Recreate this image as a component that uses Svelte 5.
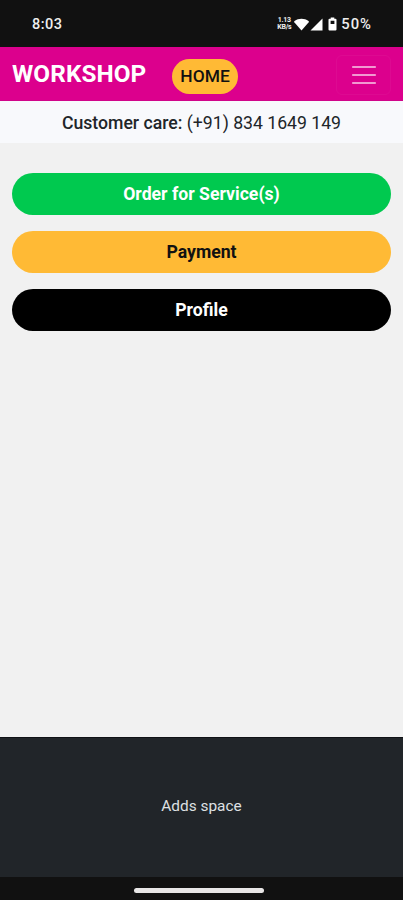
<script>
	const links = [
		{ label: 'Order for Service(s)', style: 'green' },
		{ label: 'Payment', style: 'yellow' },
		{ label: 'Profile', style: 'black' }
	];

	let menuOpen = $state(false);
</script>

<div class="screen">
	<div class="status-bar">
		<span class="time">8:03</span>
		<div class="status-icons">
			<div class="speed">
				<span>1.13</span>
				<span>KB/s</span>
			</div>
			<svg class="wifi" width="15" height="13" viewBox="0 0 15 13" fill="#fff">
				<path d="M7.5 12.6 0.3 4.2C0 3.8 0.1 3.2 0.5 2.9C4.6 -0.1 10.4 -0.1 14.5 2.9C14.9 3.2 15 3.8 14.7 4.2Z" />
			</svg>
			<svg class="signal" width="13" height="13" viewBox="0 0 13 13" fill="#fff">
				<path d="M12.5 0.5V12.5H0.5Z" />
			</svg>
			<svg class="battery" width="9" height="14" viewBox="0 0 9 14">
				<path
					fill="#fff"
					fill-rule="evenodd"
					d="M2.7 0.5H6.3V1.8H7.5Q8.5 1.8 8.5 2.8V12.4Q8.5 13.4 7.5 13.4H1.5Q0.5 13.4 0.5 12.4V2.8Q0.5 1.8 1.5 1.8H2.7ZM2.6 3.8V7H6.4V3.8Z"
				/>
			</svg>
			<span class="percent">50%</span>
		</div>
	</div>

	<nav>
		<a class="brand" href="/">WORKSHOP</a>
		<a class="home" href="/">HOME</a>
		<button type="button" aria-label="Toggle menu" onclick={() => (menuOpen = !menuOpen)}>
			<svg width="30" height="30" viewBox="0 0 30 30">
				<path
					stroke="rgba(255, 255, 255, 0.6)"
					stroke-linecap="round"
					stroke-width="2.2"
					d="M4 7h22M4 15h22M4 23h22"
				/>
			</svg>
		</button>
	</nav>

	<div class="care">
		<p><b>Customer care:</b> <span>(+91) 834 1649 149</span></p>
	</div>

	<main>
		{#each links as link}
			<a class="link {link.style}" href="/"><span>{link.label}</span></a>
		{/each}
	</main>

	<footer>
		<span>Adds space</span>
	</footer>

	<div class="gesture-bar">
		<div class="handle"></div>
	</div>
</div>

<style>
	:global(body) {
		margin: 0;
	}

	.screen {
		display: flex;
		flex-direction: column;
		width: 100%;
		height: 900px;
		background-color: #f1f1f1;
		font-family: Roboto, sans-serif;
		color: #212529;
	}

	a {
		text-decoration: none;
	}

	.status-bar {
		display: flex;
		align-items: center;
		justify-content: space-between;
		box-sizing: border-box;
		height: 47px;
		padding: 1px 31px 0 32px;
		background-color: #111;
		color: #eee;
	}

	.time {
		font-size: 14.5px;
		font-weight: 500;
		letter-spacing: 0.5px;
	}

	.status-icons {
		display: flex;
		align-items: center;
	}

	.speed {
		display: flex;
		flex-direction: column;
		align-items: center;
		width: 14px;
		margin-right: 3px;
		font-size: 7px;
		font-weight: 700;
		line-height: 7px;
		letter-spacing: -0.3px;
	}

	.signal {
		margin: 0 5px 0 1px;
	}

	.percent {
		margin-left: 4px;
		font-size: 14.8px;
		font-weight: 500;
		letter-spacing: 1px;
	}

	nav {
		display: flex;
		align-items: center;
		box-sizing: border-box;
		height: 54px;
		padding: 0 12px 0 12px;
		background-color: #dc008d;
		border-bottom: 1px solid #d0048a;
	}

	.brand {
		font-size: 24.3px;
		font-weight: 700;
		letter-spacing: 0.1px;
		color: #fff;
	}

	.home {
		margin: 5px 0 0 26px;
		padding: 0 8px;
		border-radius: 18px;
		background-color: #ffba35;
		font-size: 17.4px;
		font-weight: 500;
		line-height: 35px;
		color: #111;
	}

	nav button {
		display: flex;
		align-items: center;
		justify-content: center;
		box-sizing: border-box;
		width: 55px;
		height: 40px;
		margin: 2px 0 0 auto;
		padding: 0;
		border: 1px solid rgba(255, 255, 255, 0.04);
		border-radius: 6px;
		background: none;
	}

	.care {
		height: 42px;
		background-color: #f8f9fc;
		text-align: center;
	}

	.care p {
		margin: 0;
		font-size: 17.65px;
		line-height: 44px;
	}

	.care b {
		font-weight: 500;
	}

	main {
		display: flex;
		flex: 1;
		flex-direction: column;
		gap: 16px;
		padding: 30px 12px 0;
	}

	.link {
		height: 42px;
		border-radius: 21px;
		font-size: 17.65px;
		font-weight: 700;
		line-height: 42px;
		text-align: center;
	}

	.green {
		background-color: #00c94f;
		color: #fff;
	}

	.yellow {
		background-color: #ffba35;
		color: #111;
	}

	.black {
		background-color: #000;
		color: #fff;
	}

	footer {
		display: flex;
		align-items: center;
		justify-content: center;
		box-sizing: border-box;
		height: 140px;
		padding-bottom: 3px;
		border-top: 1px solid #101216;
		background-color: #212529;
		font-size: 15.4px;
		color: #dee0e3;
	}

	.gesture-bar {
		display: flex;
		justify-content: center;
		height: 23px;
		background-color: #111;
	}

	.handle {
		width: 130px;
		height: 5px;
		margin: 11px 5px 0 0;
		border-radius: 3px;
		background-color: #e8e6e6;
	}
</style>
